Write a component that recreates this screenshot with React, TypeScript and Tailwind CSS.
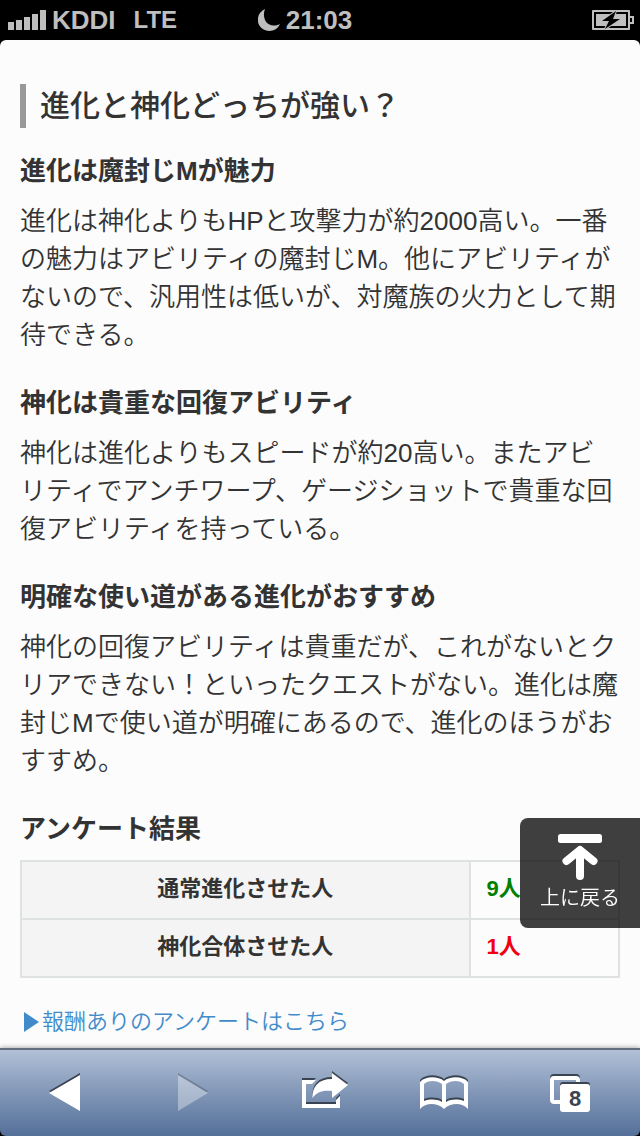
import * as React from "react";

const FONT =
  "font-['Liberation_Sans','Noto_Sans_CJK_JP',sans-serif]";

const sections = [
  {
    title: "進化は魔封じMが魅力",
    body: "進化は神化よりもHPと攻撃力が約2000高い。一番の魅力はアビリティの魔封じM。他にアビリティがないので、汎用性は低いが、対魔族の火力として期待できる。",
  },
  {
    title: "神化は貴重な回復アビリティ",
    body: "神化は進化よりもスピードが約20高い。またアビリティでアンチワープ、ゲージショットで貴重な回復アビリティを持っている。",
  },
  {
    title: "明確な使い道がある進化がおすすめ",
    body: "神化の回復アビリティは貴重だが、これがないとクリアできない！といったクエストがない。進化は魔封じMで使い道が明確にあるので、進化のほうがおすすめ。",
  },
];

const results = [
  { label: "通常進化させた人", count: "9人", color: "text-[#008000]" },
  { label: "神化合体させた人", count: "1人", color: "text-[#f00010]" },
];

function StatusBar() {
  return (
    <header className="grid h-10 grid-cols-[1fr_auto_1fr] items-center bg-black pr-1.5 pl-2 text-[26px] leading-10 font-bold text-[#bfbfbf]">
      <div className="flex items-center">
        <svg width="38" height="20" viewBox="0 0 38 20" fill="currentColor" aria-hidden="true">
          <rect x="0" y="12" width="6" height="8" />
          <rect x="8" y="10" width="6" height="10" />
          <rect x="16" y="7" width="6" height="13" />
          <rect x="24" y="4" width="6" height="16" />
          <rect x="32" y="0" width="6" height="20" />
        </svg>
        <span className="ml-1.5">KDDI</span>
        <span className="ml-[18px] text-2xl leading-10">LTE</span>
      </div>
      <div className="flex items-center gap-1.5 pr-8">
        <svg width="22" height="22" viewBox="0 0 22 22" fill="currentColor" aria-hidden="true">
          <path d="M7 0C-2 4-2 15 4 19.500C10 24 19 22 22 15C16 18 10 16.500 7.500 12C5.500 8 5.500 4 7 0Z" />
        </svg>
        <span>21:03</span>
      </div>
      <div className="flex justify-end">
        <svg width="42" height="20" viewBox="0 0 42 20" fill="none" aria-hidden="true">
          <rect x="0" y="0" width="38" height="20" rx="1" fill="#bfbfbf" />
          <rect x="3" y="3" width="32" height="14" fill="#bfbfbf" stroke="#000" strokeWidth="2" />
          <path d="M38 7h3v6h-3" stroke="#bfbfbf" strokeWidth="2" />
          <path
            d="M24 1L10 11H17L13 19L28 9H21Z"
            fill="#000"
            stroke="#bfbfbf"
            strokeWidth="2"
            paintOrder="stroke"
          />
        </svg>
      </div>
    </header>
  );
}

function BackToTop() {
  return (
    <button
      type="button"
      onClick={() => window.scrollTo({ top: 0, behavior: "smooth" })}
      className="fixed right-0 bottom-52 flex h-[110px] w-[120px] flex-col items-center rounded-l-lg bg-black/75 pt-4 text-xl leading-8 font-[350] text-white"
    >
      <svg width="44" height="48" viewBox="0 0 44 48" aria-hidden="true">
        <rect x="0" y="0" width="44" height="9" rx="2.500" fill="#fff" />
        <path
          d="M22 42V17M8.500 27L22 16L35.500 27"
          fill="none"
          stroke="#fff"
          strokeWidth="8"
          strokeLinecap="round"
          strokeLinejoin="round"
        />
      </svg>
      <span>上に戻る</span>
    </button>
  );
}

// Each glyph is drawn twice, with the dark copy raised to give the inset edge
function ToolbarIcon({ children }: { children: React.ReactNode }) {
  return (
    <svg width="64" height="44" viewBox="0 0 64 44" aria-hidden="true">
      <g transform="translate(0 -2)" color="#3a4352">
        {children}
      </g>
      <g color="#fff">{children}</g>
    </svg>
  );
}

function ToolbarButton({
  label,
  disabled,
  children,
}: {
  label: string;
  disabled?: boolean;
  children: React.ReactNode;
}) {
  return (
    <button
      type="button"
      aria-label={label}
      disabled={disabled}
      className="flex h-full items-center justify-center disabled:opacity-35"
    >
      {children}
    </button>
  );
}

function Toolbar() {
  return (
    <nav className="grid h-[88px] grid-cols-5 rounded-b-md border-t-2 border-[#626d80] bg-linear-to-b from-[#b1c0d6] to-[#546f98] shadow-[0_-1px_4px_rgba(0,0,0,0.3)]">
      <ToolbarButton label="戻る">
        <ToolbarIcon>
          <path d="M17 22L48 4V40Z" fill="currentColor" />
        </ToolbarIcon>
      </ToolbarButton>
      <ToolbarButton label="進む" disabled>
        <ToolbarIcon>
          <path d="M48 22L18 4V40Z" fill="currentColor" />
        </ToolbarIcon>
      </ToolbarButton>
      <ToolbarButton label="共有">
        <ToolbarIcon>
          <path
            d="M14 9H28L24 13H18V33H48V29L52 25V37H14Z"
            fill="currentColor"
          />
          <path
            d="M44 2L60 14L44 27V20C34 19 29 21 24.500 27C24 16 30 8 44 8Z"
            fill="currentColor"
          />
        </ToolbarIcon>
      </ToolbarButton>
      <ToolbarButton label="ブックマーク">
        <ToolbarIcon>
          <path
            fillRule="evenodd"
            d="M4 11C9 5 22 5 28 10C34 5 47 5 52 11V38C46 31 34 32 28 38C22 32 10 31 4 38ZM8 13V30C14 28 21 28 26 31V13C21 9 12 9 8 13ZM30 13V31C35 28 42 28 48 30V13C44 9 35 9 30 13Z"
            fill="currentColor"
          />
        </ToolbarIcon>
      </ToolbarButton>
      <ToolbarButton label="タブ">
        <svg width="64" height="44" viewBox="0 0 64 44" aria-hidden="true">
          <rect x="8" y="5" width="26" height="26" rx="2" fill="none" stroke="#3a4352" strokeWidth="4" />
          <rect x="8" y="7" width="26" height="24" rx="2" fill="none" stroke="#fff" strokeWidth="4" />
          <rect x="16" y="11" width="30" height="28" rx="3" fill="#3a4352" />
          <rect x="16" y="13" width="30" height="28" rx="3" fill="#fff" />
          <text x="31" y="35" textAnchor="middle" className="fill-[#3a4352] text-[22px] font-bold">
            8
          </text>
        </svg>
      </ToolbarButton>
    </nav>
  );
}

export default function App() {
  return (
    <div lang="ja" className={`flex min-h-screen flex-col bg-black text-[#333] ${FONT}`}>
      <StatusBar />
      <main className="grow rounded-t-md bg-[#fcfcfc] px-5 pt-11 pb-1.5">
        <h2 className="border-l-[6px] border-[#999] pl-3.5 text-3xl leading-11 font-medium">
          進化と神化どっちが強い？
        </h2>
        <div className="mt-6 space-y-[30px]">
          {sections.map((s) => (
            <section key={s.title}>
              <h3 className="text-[26px] leading-[38px] font-bold">{s.title}</h3>
              <p className="mt-3 text-[26px] leading-[38px] font-[350]">{s.body}</p>
            </section>
          ))}
          <section>
            <h3 className="text-[26px] leading-[38px] font-bold">アンケート結果</h3>
            <table className="mt-3 w-full table-fixed border-collapse text-[22px] leading-8">
              <tbody>
                {results.map((r) => (
                  <tr key={r.label} className="h-[58px]">
                    <th
                      scope="row"
                      className="w-3/4 border-2 border-[#dfe2e2] bg-[#f4f4f4] pb-0.5 text-center font-bold"
                    >
                      {r.label}
                    </th>
                    <td className={`border-2 border-[#dfe2e2] px-4 pb-0.5 font-bold ${r.color}`}>{r.count}</td>
                  </tr>
                ))}
              </tbody>
            </table>
          </section>
        </div>
        <a href="#survey" className="mt-6 flex items-center text-[22px] leading-10 font-[350] text-[#428bca]">
          <svg width="22" height="22" viewBox="0 0 22 22" fill="currentColor" aria-hidden="true">
            <path d="M4 1L19 11L4 21Z" />
          </svg>
          報酬ありのアンケートはこちら
        </a>
      </main>
      <Toolbar />
      <BackToTop />
    </div>
  );
}
